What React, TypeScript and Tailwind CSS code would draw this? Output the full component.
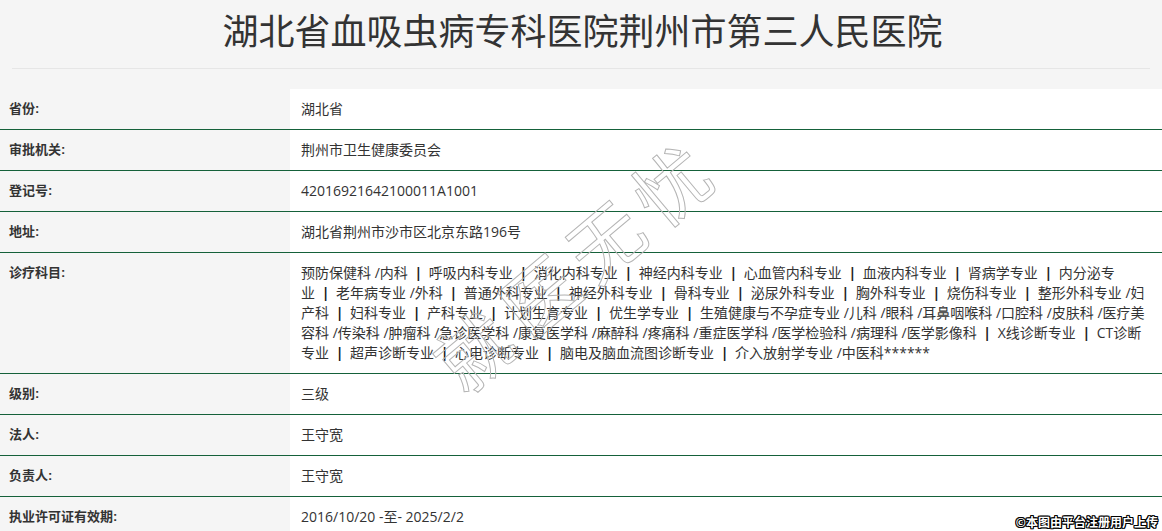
import React from "react";

const rows: { label: string; value: React.ReactNode }[] = [
  { label: "省份:", value: "湖北省" },
  { label: "审批机关:", value: "荆州市卫生健康委员会" },
  { label: "登记号:", value: "42016921642100011A1001" },
  { label: "地址:", value: "湖北省荆州市沙市区北京东路196号" },
];

const rows2: { label: string; value: string }[] = [
  { label: "级别:", value: "三级" },
  { label: "法人:", value: "王守宽" },
  { label: "负责人:", value: "王守宽" },
  { label: "执业许可证有效期:", value: "2016/10/20 -至- 2025/2/2" },
];

const Bar = () => (
  <span>
    {" "}
    <span className="px-[3px] text-[#1a1a1a] font-bold" style={{ fontFamily: '"Open Sans", sans-serif' }}>
      |
    </span>{" "}
  </span>
);

const lines: string[][] = [
  ["预防保健科 /内科", "呼吸内科专业", "消化内科专业", "神经内科专业", "心血管内科专业", "血液内科专业", "肾病学专业", "内分泌专"],
  ["业", "老年病专业 /外科", "普通外科专业", "神经外科专业", "骨科专业", "泌尿外科专业", "胸外科专业", "烧伤科专业", "整形外科专业 /妇"],
  ["产科", "妇科专业", "产科专业", "计划生育专业", "优生学专业", "生殖健康与不孕症专业 /儿科 /眼科 /耳鼻咽喉科 /口腔科 /皮肤科 /医疗美"],
  ["容科 /传染科 /肿瘤科 /急诊医学科 /康复医学科 /麻醉科 /疼痛科 /重症医学科 /医学检验科 /病理科 /医学影像科", "X线诊断专业", "CT诊断"],
  ["专业", "超声诊断专业", "心电诊断专业", "脑电及脑血流图诊断专业", "介入放射学专业 /中医科******"],
];

function Row({ label, value, multi }: { label: string; value: React.ReactNode; multi?: boolean }) {
  return (
    <div className="flex border-b border-[#15613a]">
      <div
        className={`w-[290px] shrink-0 pl-[9px] text-[13px] font-bold text-[#333] leading-[20px] ${
          multi ? "pt-[10px]" : "py-[10px]"
        }`}
      >
        {label}
      </div>
      <div
        className="flex-1 bg-white pl-[11px] py-[10px] text-[14px] leading-[20px] text-[#333]"
        style={{ fontFamily: '"Open Sans", "Noto Sans CJK SC", sans-serif' }}
      >
        {value}
      </div>
    </div>
  );
}

export default function App() {
  return (
    <div
      className="relative min-h-[531px] bg-[#f5f5f5] overflow-hidden"
      style={{ fontFamily: '"Liberation Sans", "Noto Sans CJK SC", sans-serif' }}
    >
      <div className="h-[68px] flex items-center justify-center">
        <h1 className="text-[36px] leading-[40px] text-[#333] font-normal mt-[-2px] pl-[3px]">湖北省血吸虫病专科医院荆州市第三人民医院</h1>
      </div>
      <div className="mx-[12px] h-px bg-[#e6e6e6]" />
      <div className="h-[20px]" />
      <div>
        {rows.map((r) => (
          <Row key={r.label} label={r.label} value={r.value} />
        ))}
        <Row
          multi
          label="诊疗科目:"
          value={
            <div className="whitespace-nowrap">
              {lines.map((ln, i) => (
                <div key={i}>
                  {ln.map((seg, j) => (
                    <React.Fragment key={j}>
                      {j > 0 && <Bar />}
                      {seg}
                    </React.Fragment>
                  ))}
                </div>
              ))}
            </div>
          }
        />
        {rows2.map((r) => (
          <Row key={r.label} label={r.label} value={r.value} />
        ))}
      </div>

      <div
        className="absolute left-[575px] top-[262px] -translate-x-1/2 -translate-y-1/2 -rotate-[40deg] pointer-events-none whitespace-nowrap text-[74px] leading-none tracking-[12px] text-transparent [-webkit-text-stroke:1px_#b4b4b4] font-normal"
        style={{ fontFamily: '"Noto Sans CJK SC", sans-serif' }}
      >
        就医无忧
      </div>

      <div
        className="absolute right-[4px] top-[514px] text-[12px] leading-[16px] text-white font-bold"
        style={{
          fontFamily: '"Noto Sans CJK SC", sans-serif',
          textShadow:
            "1px 0 0 #000, -1px 0 0 #000, 0 1px 0 #000, 0 -1px 0 #000, 1px 1px 0 #000, -1px -1px 0 #000, 1px -1px 0 #000, -1px 1px 0 #000",
        }}
      >
        ©本图由平台注册用户上传
      </div>
    </div>
  );
}
